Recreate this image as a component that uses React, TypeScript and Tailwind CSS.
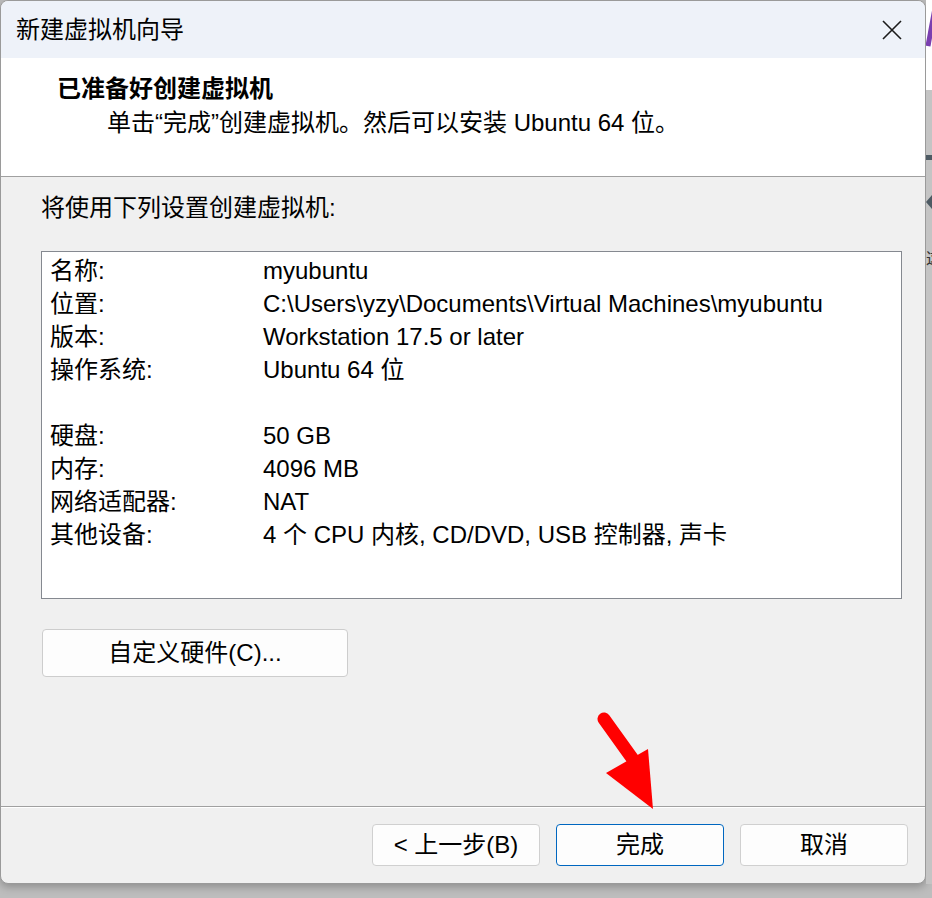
import React from "react";

const font = { fontFamily: "'Liberation Sans', 'Noto Sans CJK SC', sans-serif" };

const rows: [string, string][] = [
  ["名称:", "myubuntu"],
  ["位置:", "C:\\Users\\yzy\\Documents\\Virtual Machines\\myubuntu"],
  ["版本:", "Workstation 17.5 or later"],
  ["操作系统:", "Ubuntu 64 位"],
  ["", ""],
  ["硬盘:", "50 GB"],
  ["内存:", "4096 MB"],
  ["网络适配器:", "NAT"],
  ["其他设备:", "4 个 CPU 内核, CD/DVD, USB 控制器, 声卡"],
];

const Button = ({ label, primary }: { label: string; primary?: boolean }) => (
  <button
    className={
      primary
        ? "w-[168px] h-[42px] rounded-[4px] border border-[#0067c0] bg-[#fdfdfd] text-[24px] leading-[24px] text-black"
        : "w-[168px] h-[42px] rounded-[4px] border border-[#d0d0d0] bg-[#fdfdfd] text-[24px] leading-[24px] text-black"
    }
  >
    {label}
  </button>
);

export default function App() {
  return (
    <div className="relative w-[932px] h-[898px] overflow-hidden bg-[#bdbdbd] text-black" style={font}>
      <div className="flex">
        {/* dialog window */}
        <div className="w-[926px] h-[884px] flex flex-col shrink-0 border border-[#9a9a9a] rounded-[8px] overflow-hidden bg-[#f0f0f0] shadow-[0_3px_8px_rgba(0,0,0,0.25)]">
          <div className="h-[57px] shrink-0 flex items-center justify-between pl-[15px] pr-[23px] bg-[#eef2f9]">
            <span className="text-[24px] leading-[24px]">新建虚拟机向导</span>
            <svg width="20" height="20" viewBox="0 0 20 20" className="mt-[1px]">
              <path d="M1 1 L19 19 M19 1 L1 19" stroke="#1b1b1b" strokeWidth="1.6" fill="none" />
            </svg>
          </div>

          <div className="h-[119px] shrink-0 bg-white border-b border-[#a0a0a0] pt-[19px] pl-[56px]">
            <div className="text-[24px] leading-[24px] font-bold">已准备好创建虚拟机</div>
            <div className="mt-[10px] ml-[50px] text-[24px] leading-[24px]">
              单击“完成”创建虚拟机。然后可以安装 Ubuntu 64 位。
            </div>
          </div>

          <div className="flex-1 pt-[19px] pl-[40px]">
            <div className="text-[24px] leading-[24px]">将使用下列设置创建虚拟机:</div>
            <div className="mt-[31px] w-[861px] h-[348px] border border-[#858990] bg-white pt-[2px] pl-[8px]">
              {rows.map(([k, v], i) => (
                <div key={i} className="grid grid-cols-[213px_1fr] h-[33px] text-[24px] leading-[33px] whitespace-nowrap">
                  <span>{k}</span>
                  <span>{v}</span>
                </div>
              ))}
            </div>
            <button className="mt-[30px] ml-[1px] w-[306px] h-[48px] rounded-[4px] border border-[#cdcdcd] bg-[#fdfdfd] text-[24px] leading-[24px]">
              自定义硬件(C)...
            </button>
          </div>

          <div className="h-[77px] shrink-0 border-t border-[#a0a0a0]">
            <div className="h-[1px] bg-white" />
            <div className="flex justify-end gap-[16px] pt-[16px] pr-[17px]">
              <Button label="< 上一步(B)" />
              <Button label="完成" primary />
              <Button label="取消" />
            </div>
          </div>
        </div>

        {/* sliver of the window behind */}
        <div className="flex-1 h-[884px] flex flex-col">
          <div className="h-[90px] bg-white relative overflow-hidden">
            <svg width="8" height="90" className="block">
              <path d="M9 8 L2 46" stroke="#7a3fb0" strokeWidth="5" />
            </svg>
          </div>
          <div className="flex-1 bg-[#c4c4c4] flex flex-col">
            <div className="mt-[65px] h-[5px] bg-[#4d5a63]" />
            <div className="mt-[35px] w-0 h-0 border-y-[7px] border-y-transparent border-r-[6px] border-r-[#4d5a63]" />
            <div className="mt-[40px] text-[16px] leading-[20px] text-[#333] overflow-hidden">这</div>
          </div>
        </div>
      </div>

      <svg className="absolute left-0 top-0 pointer-events-none" width="932" height="898">
        <line x1="604" y1="719" x2="637" y2="765" stroke="#ff0000" strokeWidth="13" strokeLinecap="round" />
        <polygon points="606,773 648,749 653,809" fill="#ff0000" />
      </svg>
    </div>
  );
}
